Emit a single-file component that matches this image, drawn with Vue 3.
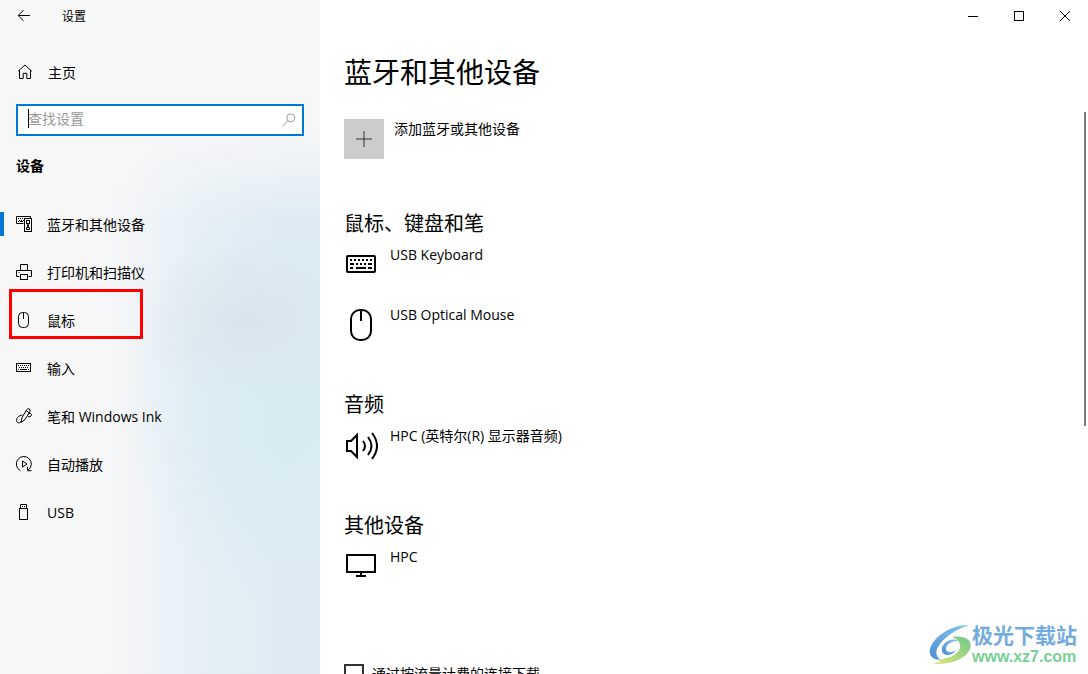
<script setup>
const devices = [
  {
    title: '鼠标、键盘和笔',
    items: [
      { name: 'USB Keyboard', icon: 'keyboard' },
      { name: 'USB Optical Mouse', icon: 'mouse' }
    ]
  },
  { title: '音频', items: [{ name: 'HPC (英特尔(R) 显示器音频)', icon: 'speaker' }] },
  { title: '其他设备', items: [{ name: 'HPC', icon: 'monitor' }] }
]

const links = [
  { label: '蓝牙和其他设备', icon: 'devices', active: true },
  { label: '打印机和扫描仪', icon: 'printer' },
  { label: '鼠标', icon: 'mouse', marked: true },
  { label: '输入', icon: 'keyboard' },
  { label: '笔和 Windows Ink', icon: 'pen' },
  { label: '自动播放', icon: 'autoplay' },
  { label: 'USB', icon: 'usb' }
]
</script>

<template>
  <div class="window">
    <aside class="sidebar">
      <header class="titlebar">
        <button class="back" aria-label="返回">
          <svg width="16" height="16" viewBox="0 0 16 16"><path d="M14 7.5H2.5M7.5 2.2 2.2 7.5l5.3 5.3" /></svg>
        </button>
        <span class="app-name">设置</span>
      </header>

      <a class="home" href="#home">
        <svg width="18" height="18" viewBox="0 0 18 18"><path d="M2.2 8.2 9 2l6.8 6.2M3.5 7.2v8.3h3.7v-5.2h3.6v5.2h3.7V7.2" /></svg>
        <span>主页</span>
      </a>

      <div class="search">
        <input type="text" placeholder="查找设置" aria-label="查找设置" />
        <span class="caret"></span>
        <svg width="16" height="16" viewBox="0 0 16 16"><circle cx="9.8" cy="5.8" r="4" /><path d="M7 8.7 1.5 14.2" /></svg>
      </div>

      <h2 class="group">设备</h2>

      <nav>
        <a
          v-for="link in links"
          :key="link.label"
          href="#"
          class="nav-link"
          :class="{ active: link.active, marked: link.marked }"
        >
          <svg v-if="link.icon === 'devices'" width="18" height="18" viewBox="0 0 18 18">
            <path d="M8.500 8.500h-7v-7h14v2" />
            <path d="M3 3.500h11M4 5.500h5" stroke-dasharray="1 1" /><path d="M3 6.500h1m1 0h3" />
            <rect x="9.500" y="3.500" width="7" height="13" />
            <rect x="11.500" y="5.500" width="3" height="3" />
            <path d="M12.500 9.500h1v2h-1zM11.500 12.500h3v2h-3z" />
          </svg>
          <svg v-else-if="link.icon === 'printer'" width="18" height="18" viewBox="0 0 18 18">
            <path d="M5.500 7.500v-6h7v6M4.500 13.500h-3v-6h15v6h-3M3.500 9.500h1" /><rect x="5.500" y="11.500" width="7" height="5" />
          </svg>
          <svg v-else-if="link.icon === 'mouse'" width="18" height="18" viewBox="0 0 18 18">
            <rect x="3.500" y="1.500" width="10" height="15" rx="4" /><path d="M8.500 2v6" />
          </svg>
          <svg v-else-if="link.icon === 'keyboard'" width="18" height="18" viewBox="0 0 18 18">
            <rect x="1.500" y="4.500" width="14" height="8" />
            <path d="M3 6.500h11M4 8.500h10" stroke-dasharray="1 1" /><path d="M3 10.500h1m1 0h7m1 0h1" />
          </svg>
          <svg v-else-if="link.icon === 'pen'" class="pen" width="18" height="18" viewBox="0 0 18 18">
            <path d="M6 15.500 6.800 11 11.600 2.800q1.300-1.800 2.700-.9 1.400 1 .5 2.900L10 12.500zM11.200 3.800l3.300 2M7.500 8C4 8.500 1.500 10.500 1.500 13.200c0 2.800 3.300 3.600 4.500 1.300M14 6.500c1.700-.3 2.700.4 2.500 1.600s-2 2-3.500 1.400" />
          </svg>
          <svg v-else-if="link.icon === 'autoplay'" width="18" height="18" viewBox="0 0 18 18">
            <path d="M5.500 15.700A7.500 7.500 0 1 1 13 15.200M12.500 11.700v4h4M7.500 6v6l4.500-3z" />
          </svg>
          <svg v-else width="18" height="18" viewBox="0 0 18 18">
            <rect x="4.500" y="5.500" width="8" height="11" /><path d="M5.500 5.500v-4h6v4M7 3.500h1m1 0h1" />
          </svg>
          <span>{{ link.label }}</span>
        </a>
      </nav>
    </aside>

    <main class="content">
      <div class="controls">
        <button aria-label="最小化"><svg width="12" height="12" viewBox="0 0 12 12"><path d="M1 6.500h10" /></svg></button>
        <button aria-label="最大化"><svg width="12" height="12" viewBox="0 0 12 12"><rect x="1.500" y="1.500" width="9" height="9" /></svg></button>
        <button aria-label="关闭"><svg width="12" height="12" viewBox="0 0 12 12"><path d="m1 1 10 10M11 1 1 11" /></svg></button>
      </div>

      <div class="page">
        <h1>蓝牙和其他设备</h1>
        <button class="add">
          <span class="plus"><svg width="18" height="18" viewBox="0 0 18 18"><path d="M9 1v16M1 9h16" /></svg></span>
          <span>添加蓝牙或其他设备</span>
        </button>

        <section v-for="group in devices" :key="group.title">
          <h2>{{ group.title }}</h2>
          <div v-for="item in group.items" :key="item.name" class="device">
            <svg v-if="item.icon === 'keyboard'" width="34" height="40" viewBox="0 0 34 40">
              <rect x="3" y="11" width="28" height="16" rx="1" />
              <path d="M6 15h22" stroke-dasharray="2 2" /><path d="M6 19h4m2 0h2m2 0h2m2 0h2m2 0h4M6 23h3m3 0h10m2 0h4" />
            </svg>
            <svg v-else-if="item.icon === 'mouse'" width="34" height="40" viewBox="0 0 34 40">
              <rect x="7" y="5" width="20" height="30" rx="9" /><path d="M17 5v11" />
            </svg>
            <svg v-else-if="item.icon === 'speaker'" width="34" height="40" viewBox="0 0 34 40">
              <path d="M3 15h4l6-6v22l-6-6H3zM19 15q4 5 0 10M24 11q7 9 0 18M28 7q10 13 0 26" />
            </svg>
            <svg v-else width="34" height="40" viewBox="0 0 34 40">
              <path d="M3 8h28v17H3zM17 25v4M12 29h10" />
            </svg>
            <span>{{ item.name }}</span>
          </div>
        </section>

        <label class="metered"><input type="checkbox" /><span>通过按流量计费的连接下载</span></label>
      </div>
      <div class="scroll-thumb"></div>
    </main>

    <div class="watermark">
      <svg width="44" height="44" viewBox="0 0 44 44">
        <defs>
          <linearGradient id="sky" x1="0" y1="1" x2="1" y2="0"><stop offset="0" stop-color="#4f8ed2" /><stop offset="1" stop-color="#84c8f0" /></linearGradient>
          <linearGradient id="leaf" x1="0" y1="1" x2="1" y2="0"><stop offset="0" stop-color="#e2e67c" /><stop offset="1" stop-color="#6cc98a" /></linearGradient>
        </defs>
        <path fill="url(#sky)" d="M41 2C24 1 5 14 2 26c-2 8 5 11 11 11-6-4-6-10-1-16C18 13 29 6 41 2z" />
        <path fill="url(#sky)" d="M32 18c-9-5-20 3-18 10 1 6 11 5 14-1-4 3-10 3-10-1 0-5 7-9 14-8z" />
        <path fill="url(#leaf)" d="M24 14c6 2 9 6 8 11-2 8-14 11-24 12l5 1-8 3c18 1 33-5 37-15 3-8-4-14-18-12z" />
      </svg>
      <div class="brand">
        <span class="brand-name">极光下载站</span>
        <span class="brand-url">www.xz7.com</span>
      </div>
    </div>
  </div>
</template>

<style>
body {
  overflow: hidden;
}
</style>

<style scoped>
.window {
  position: relative;
  display: flex;
  height: 100vh;
  overflow: hidden;
  background: #fff;
  color: #000;
  font: 14px/20px 'Open Sans', 'Noto Sans CJK SC', sans-serif;
}
h1,
h2 {
  margin: 0;
  font-weight: 400;
}
button {
  padding: 0;
  border: 0;
  background: none;
  color: inherit;
  font: inherit;
}
a {
  color: inherit;
  text-decoration: none;
}
svg {
  flex: none;
  fill: none;
  stroke: currentColor;
}
.sidebar {
  flex: none;
  width: 320px;
  background:
    linear-gradient(#f7f7f7 120px, rgba(247, 247, 247, 0.7) 155px, rgba(247, 247, 247, 0) 220px),
    radial-gradient(ellipse 120px 80px at 245px 320px, rgba(218, 222, 231, 0.6), rgba(218, 222, 231, 0.25) 50%, rgba(218, 222, 231, 0)),
    radial-gradient(ellipse 150px 200px at 280px 400px, rgba(215, 235, 242, 0.9), rgba(215, 235, 242, 0.6) 50%, rgba(215, 235, 242, 0)),
    linear-gradient(90deg, #f7f7f7 90px, #f3f5f7 130px, #ebf2f7 165px, #e5eff5 200px, #dfebf3 280px);
}
.titlebar {
  display: flex;
  align-items: center;
  height: 32px;
}
.back {
  display: flex;
  justify-content: center;
  width: 48px;
}
.app-name {
  margin-left: 14px;
  padding-top: 2px;
  font-size: 12px;
}
.home,
.nav-link {
  display: flex;
  align-items: center;
  gap: 14px;
  height: 48px;
}
.home {
  margin-top: 16px;
  padding-left: 16px;
}
.home span,
.nav-link span {
  padding-top: 2px;
}
.search {
  position: relative;
  display: flex;
  align-items: center;
  height: 28px;
  margin: 8px 16px 0;
  padding-right: 5px;
  border: 2px solid #0078d7;
  background: #fff;
}
.search input {
  flex: 1;
  min-width: 0;
  padding: 0 0 2px 10px;
  border: 0;
  outline: 0;
  background: none;
  font: inherit;
}
.search input::placeholder {
  color: #999;
  opacity: 1;
}
.search svg {
  color: #999;
}
.caret {
  position: absolute;
  top: 3px;
  left: 10px;
  width: 1px;
  height: 19px;
  background: #000;
}
.group {
  margin: 20px 16px 24px;
  font-size: 14px;
  font-weight: 700;
  line-height: 20px;
}
.nav-link {
  position: relative;
  padding-left: 15px;
}
.nav-link.active::before {
  content: '';
  position: absolute;
  top: 12px;
  left: 0;
  width: 4px;
  height: 24px;
  background: #0078d7;
}
.nav-link.marked::after {
  content: '';
  position: absolute;
  top: -7px;
  left: 9px;
  width: 128px;
  height: 44px;
  border: 3px solid #f00;
}
.content {
  position: relative;
  flex: 1;
  min-width: 0;
}
.controls {
  display: flex;
  justify-content: flex-end;
  height: 32px;
}
.controls button {
  display: flex;
  align-items: center;
  justify-content: center;
  width: 46px;
}
.page {
  padding: 20px 24px 0;
}
h1 {
  font-size: 28px;
  line-height: 40px;
}
.add {
  display: flex;
  gap: 10px;
  margin: 27px 0 51px;
  text-align: left;
}
.plus {
  display: flex;
  align-items: center;
  justify-content: center;
  width: 40px;
  height: 40px;
  background: #ccc;
  color: #333;
}
section {
  margin-bottom: 26px;
}
section h2 {
  margin-bottom: 7px;
  font-size: 20px;
  line-height: 28px;
}
.device {
  display: flex;
  gap: 12px;
  height: 60px;
}
.device svg {
  stroke-width: 2;
}
.metered {
  display: flex;
  align-items: center;
  gap: 8px;
  margin-top: 57px;
  white-space: nowrap;
}
.metered input {
  appearance: none;
  width: 20px;
  height: 20px;
  margin: 0;
  border: 2px solid #333;
}
.scroll-thumb {
  position: absolute;
  top: 112px;
  right: 2px;
  width: 2px;
  height: 314px;
  background: #7a7a7a;
}
.watermark {
  position: absolute;
  right: 11px;
  bottom: 7px;
  display: flex;
  align-items: center;
}
.watermark svg {
  stroke: none;
}
.brand {
  display: flex;
  flex-direction: column;
}
.brand-name {
  color: #74abdf;
  font-size: 21px;
  font-weight: 700;
  line-height: 24px;
}
.brand-url {
  color: #78cf93;
  font: 700 16px/20px 'Liberation Sans', sans-serif;
}
</style>
